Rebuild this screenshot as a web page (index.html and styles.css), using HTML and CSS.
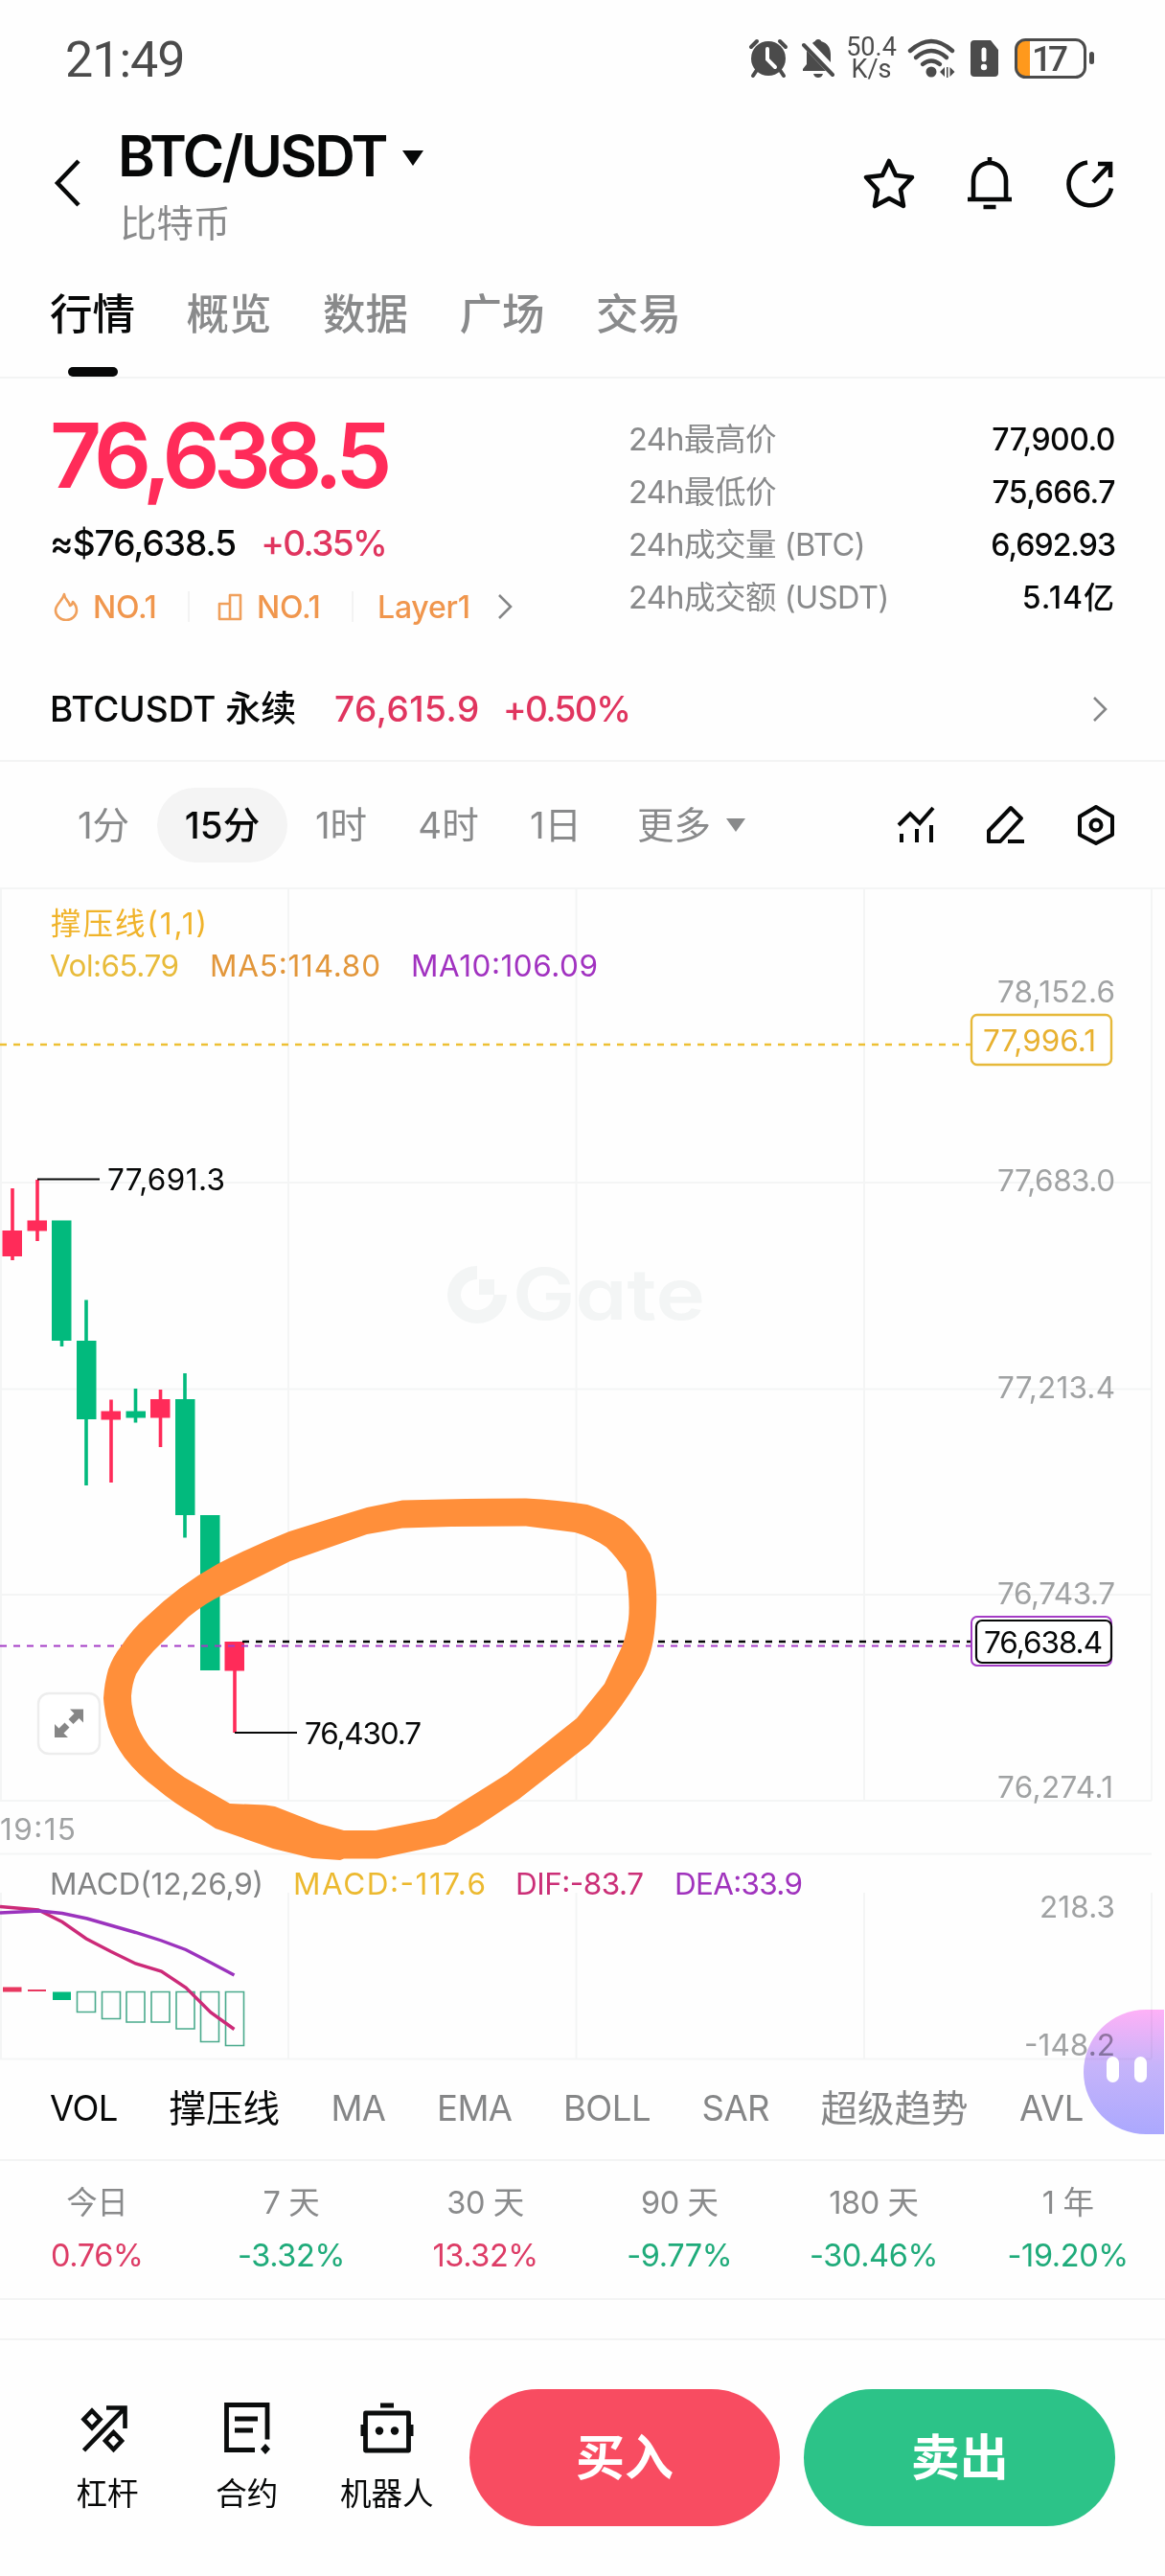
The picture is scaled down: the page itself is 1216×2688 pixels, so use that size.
FILE: index.html
```html
<!DOCTYPE html>
<html lang="zh-CN">
<head>
    <meta charset="UTF-8">
    <meta name="viewport" content="width=device-width, initial-scale=1.0">
    <title>BTC/USDT</title>
    <link rel="stylesheet" href="styles.css">
</head>
<body>
    <div class="status-bar">
        <span class="time">21:49</span>
        <div class="status-icons">
            <svg class="st-alarm" width="42" height="42" viewBox="0 0 42 42">
                <path d="M3 9l6-6M33 3l6 6" stroke="#4b4b4b" stroke-width="4" stroke-linecap="round"/>
                <path d="M9 33l-4 6M33 33l4 6" stroke="#4b4b4b" stroke-width="4" stroke-linecap="round"/>
                <circle cx="21" cy="21" r="18" fill="#4b4b4b"/>
                <path d="M20 11v11l8 8" fill="none" stroke="#fff" stroke-width="4" stroke-linecap="round"/>
            </svg>
            <svg class="st-mute" width="34" height="42" viewBox="0 0 34 42">
                <path d="M17 1c2 0 3 1 3 2 7 2 10 7 10 14v8L11 5c1-1 2-2 3-2 0-1 1-2 3-2zM5 13l20 21H1v-2l4-5zM12 37h10c-1 3-3 4-5 4s-4-1-5-4z" fill="#4b4b4b"/>
                <path d="M2 7l30 31" stroke="#4b4b4b" stroke-width="4" stroke-linecap="round"/>
            </svg>
            <div class="net-speed"><span>50.4</span><span>K/s</span></div>
            <svg class="st-wifi" width="50" height="42" viewBox="0 0 50 42">
                <g fill="none" stroke="#4b4b4b" stroke-width="4.4" stroke-linecap="round">
                    <path d="M3 13q22-20 44 0"/>
                    <path d="M9 20q16-14 32 0"/>
                    <path d="M16 27q9-7 18 0"/>
                </g>
                <circle cx="25" cy="35" r="5.5" fill="#4b4b4b"/>
                <path d="M34 35l5-5v10zM49.500 35l-5-5v10zM41 30h1.500v11h-1.500z" fill="#4b4b4b"/>
            </svg>
            <svg class="st-sim" width="31" height="40" viewBox="0 0 31 40">
                <path d="M5 1h17l8 10v24q0 4-4 4H5q-4 0-4-4V5q0-4 4-4z" fill="#4b4b4b"/>
                <path d="M15 11v10" stroke="#fff" stroke-width="5" stroke-linecap="round"/>
                <circle cx="15" cy="29" r="3.200" fill="#fff"/>
            </svg>
            <svg class="st-battery" width="84" height="42" viewBox="0 0 84 42">
                <path d="M11 2h5v38h-5q-9 0-9-9V11q0-9 9-9z" fill="#ff991c"/>
                <rect x="1.500" y="1.500" width="72" height="39" rx="10" fill="none" stroke="#4b4b4b" stroke-width="3"/>
                <rect x="78" y="14" width="5" height="13" rx="2.500" fill="#4b4b4b"/>
                <text x="18" y="34" textLength="38" class="battery-text">17</text>
            </svg>
        </div>
    </div>

    <header class="header">
        <svg class="back" width="30" height="52" viewBox="0 0 30 52">
            <path d="M27 3L5 26l22 23" fill="none" stroke="#070808" stroke-width="4.500"/>
        </svg>
        <div class="pair">
            <div class="pair-name"><span>BTC/USDT</span><i class="caret"></i></div>
            <div class="pair-sub">比特币</div>
        </div>
        <div class="header-icons">
            <svg width="56" height="56" viewBox="0 0 56 56">
                <path d="M28 5l7 15 17 2-12 13 3 17-15-8-15 8 3-17L4 22l17-2z" fill="none" stroke="#070808" stroke-width="4.600" stroke-linejoin="round"/>
            </svg>
            <svg width="56" height="56" viewBox="0 0 56 56">
                <path d="M28 1v6M11 45V25a17 18 0 0 1 34 0v20M5 45h46M21.500 53h13" fill="none" stroke="#070808" stroke-width="4.600"/>
            </svg>
            <svg width="56" height="56" viewBox="0 0 56 56">
                <path d="M25 6.500a22.500 22.500 0 1 0 25 27" fill="none" stroke="#070808" stroke-width="4.600"/>
                <path d="M36 8h13v14M49 8L31 27" fill="none" stroke="#070808" stroke-width="4.600"/>
            </svg>
        </div>
    </header>

    <nav class="tabs">
        <a class="tab active">行情</a>
        <a class="tab">概览</a>
        <a class="tab">数据</a>
        <a class="tab">广场</a>
        <a class="tab">交易</a>
    </nav>

    <section class="summary">
        <div class="summary-left">
            <div class="price">76,638.5</div>
            <div class="fiat"><span class="fiat-value">≈$76,638.5</span><span class="up">+0.35%</span></div>
            <div class="tags">
                <svg class="flame" width="26" height="30" viewBox="0 0 26 30">
                    <path d="M11 2c0 5 5 7 6 12 2-1 3-3 3-4 3 3 4 6 4 9a11 10 0 0 1-22 0c0-7 7-9 9-17z" fill="none" stroke="#f0a05c" stroke-width="2.600" stroke-linejoin="round"/>
                </svg>
                <span class="tag-no">NO.1</span>
                <i class="divider"></i>
                <svg class="block-icon" width="26" height="30" viewBox="0 0 26 30">
                    <path d="M13 28V3h11v25H2V12h11" fill="none" stroke="#f0a05c" stroke-width="2.600" stroke-linejoin="round"/>
                </svg>
                <span class="tag-no">NO.1</span>
                <i class="divider"></i>
                <span class="tag-layer">Layer1</span>
                <svg width="16" height="28" viewBox="0 0 16 28"><path d="M2 2l12 12L2 26" fill="none" stroke="#858687" stroke-width="2.600"/></svg>
            </div>
        </div>
        <div class="stats">
            <div class="stat"><span>24h最高价</span><b>77,900.0</b></div>
            <div class="stat"><span>24h最低价</span><b>75,666.7</b></div>
            <div class="stat"><span>24h成交量 (BTC)</span><b class="tight">6,692.93</b></div>
            <div class="stat"><span>24h成交额 (USDT)</span><b class="loose">5.14亿</b></div>
        </div>
    </section>

    <section class="perp">
        <span class="perp-name">BTCUSDT 永续</span>
        <span class="perp-price">76,615.9</span>
        <span class="perp-change">+0.50%</span>
        <svg width="16" height="28" viewBox="0 0 16 28"><path d="M2 2l12 12L2 26" fill="none" stroke="#858687" stroke-width="2.600"/></svg>
    </section>

    <nav class="periods">
        <a class="period">1分</a>
        <a class="period active">15分</a>
        <a class="period">1时</a>
        <a class="period">4时</a>
        <a class="period">1日</a>
        <a class="period more">更多<i class="caret"></i></a>
        <div class="tools">
            <svg width="42" height="44" viewBox="0 0 42 44">
                <path d="M3 22l12-12 10 10L39 4M6 31v9M22 26v14M37 22v18" fill="none" stroke="#070808" stroke-width="4"/>
            </svg>
            <svg width="42" height="44" viewBox="0 0 42 44">
                <path d="M3 28L26 4l11 11-22 24H3zM23 39h17" fill="none" stroke="#070808" stroke-width="4" stroke-linejoin="round"/>
            </svg>
            <svg width="42" height="44" viewBox="0 0 42 44">
                <path d="M21 3l17 10v19L21 41 4 32V13z" fill="none" stroke="#070808" stroke-width="4" stroke-linejoin="round"/>
                <circle cx="21" cy="22" r="5.500" fill="none" stroke="#070808" stroke-width="4"/>
            </svg>
        </div>
    </nav>

    <section class="chart">
        <svg width="1216" height="1224" viewBox="0 926 1216 1224">
            <!-- grid -->
            <g class="grid">
                <path d="M0 927H1216M0 1234H1202M0 1449.500H1202M0 1664H1202M0 1879H1202M0 1934.500H1202M0 2148.500H1202"/>
                <path d="M1 926V1879M301 926V1879M601.500 926V1879M902 926V1879M1202 926V1879"/>
                <path d="M1 1975V2148M301 1975V2148M601.500 1975V2148M902 1975V2148M1202 1975V2148"/>
            </g>

            <!-- watermark -->
            <g fill="#f3f5f5">
                <path d="M498 1321a31 30 0 1 0 31 30h-14a17 16 0 1 1-17-16z"/>
                <path d="M500 1335h16v16h-16z"/>
                <text x="535" y="1377" class="watermark" textLength="201" lengthAdjust="spacingAndGlyphs">Gate</text>
            </g>

            <!-- legends -->
            <text x="53" y="975" class="legend" fill="#f0b32a" textLength="163">撑压线(1,1)</text>
            <text x="52" y="1019" class="legend" fill="#e8bb3a" textLength="135">Vol:65.79</text>
            <text x="219" y="1019" class="legend" fill="#e2963a" textLength="178">MA5:114.80</text>
            <text x="429" y="1019" class="legend" fill="#a132c0" textLength="195">MA10:106.09</text>

            <!-- support and resistance lines -->
            <path d="M0 1090H1014" stroke="#edc034" stroke-width="2.400" stroke-dasharray="7 7"/>

            <!-- candles -->
            <g fill="#ff2b59">
                <path d="M11.200 1240h3.600v75h-3.600zM2.500 1284h20.500v27h-20.500z"/>
                <path d="M37.200 1231h3.600v64h-3.600zM28.500 1273.500h20.500v11h-20.500z"/>
                <path d="M114.200 1460.500h3.600v86.500h-3.600zM105.500 1472.500h20.500v9h-20.500z"/>
                <path d="M165.700 1450h3.600v60h-3.600zM157 1460h20.500v19.500h-20.500z"/>
                <path d="M243.200 1713h3.600v95h-3.600zM234.500 1713h20.500v30.500h-20.500z"/>
            </g>
            <g fill="#02ba7d">
                <path d="M62.700 1273.500h3.600v131.500h-3.600zM54 1273.500h20.500v125.500h-20.500z"/>
                <path d="M88.200 1356.500h3.600v193.500h-3.600zM80 1399h20.500v82h-20.500z"/>
                <path d="M139.700 1449h3.600v35.500h-3.600zM131.500 1472.500h20.500v7h-20.500z"/>
                <path d="M191.200 1433h3.600v171.500h-3.600zM183 1460h20.500v121h-20.500z"/>
                <path d="M209 1581h20.500v162h-20.500z"/>
            </g>
            <path d="M0 1717.500H1014" stroke="#a43cc6" stroke-width="2.200" stroke-dasharray="7 7"/>
            <path d="M253 1713H1018" stroke="#070808" stroke-width="2.400" stroke-dasharray="7 7"/>
            <path d="M39 1230.500H104M245 1808H310" stroke="#070808" stroke-width="2"/>
            <text x="112" y="1242" class="legend" fill="#070808" textLength="123">77,691.3</text>
            <text x="318" y="1820" class="legend" fill="#070808" textLength="122">76,430.7</text>

            <!-- price axis -->
            <g class="legend" fill="#a0a2a3">
                <text x="1041" y="1046" textLength="123">78,152.6</text>
                <text x="1041" y="1243" textLength="123">77,683.0</text>
                <text x="1041" y="1459" textLength="123">77,213.4</text>
                <text x="1041" y="1674" textLength="123">76,743.7</text>
                <text x="1041" y="1876" textLength="121">76,274.1</text>
                <text x="0" y="1920" textLength="79">19:15</text>
                <text x="1085" y="2001" textLength="79">218.3</text>
                <text x="1069" y="2145" textLength="95">-148.2</text>
            </g>
            <rect x="1014" y="1059" width="146" height="52" rx="6" fill="#fff" stroke="#e6b93a" stroke-width="2.400"/>
            <text x="1026" y="1097" class="legend" fill="#e8b130" textLength="118">77,996.1</text>
            <rect x="1014" y="1687" width="146" height="51" rx="6" fill="#fff" stroke="#a43cc6" stroke-width="2"/>
            <rect x="1019" y="1691" width="141" height="44" rx="6" fill="#fff" stroke="#070808" stroke-width="2.200"/>
            <text x="1027" y="1725" class="legend" fill="#070808" textLength="124">76,638.4</text>

            <!-- fullscreen button -->
            <rect x="40" y="1767" width="64" height="63" rx="11" fill="#fff" stroke="#ededed" stroke-width="2.500"/>
            <path d="M73 1783.500h14v14l-4.500-4.500-6 6-5-5 6-6zM71 1813h-14v-14l4.500 4.500 6-6 5 5-6 6z" fill="#868686"/>

            <!-- hand-drawn marker -->
            <path fill="#ff8f3a" fill-rule="evenodd" d="M420 1565.500L383 1573 347 1584 302 1598 Q262 1614 227 1632 Q187 1654 153 1687 Q138 1700 127 1717 Q118 1728 113 1742 Q109 1756 108 1772 Q109 1788 113 1802 Q119 1819 130 1834 Q144 1852 163 1866 Q182 1882 205 1895L225 1908 285 1929 326 1939 355 1941 359 1939.500 394 1939.500 465 1924.500 500 1905 542 1877 615 1820 633 1800 Q652 1777 666 1753 Q679 1735 683 1704 Q686 1680 685 1660 Q684 1640 679 1622 Q668 1601 651 1587 Q635 1577 613 1570 Q582 1565 549 1563.500 L486 1564Z
                M420 1594.500L471 1593 549 1592.500 600 1599 Q618 1604 633 1614.500 Q644 1625 653.500 1640 Q658 1672 656 1690 Q653 1712 646 1725 L631 1757 602 1793 529 1851 455 1897.500 392 1910 359 1910 333 1903 287 1885 277 1883.500 240 1882 193 1855 Q176 1844 160 1827 Q149 1815 143 1800 Q137 1785 137 1769.500 Q138 1757 142 1747 Q152 1730 167 1716 L197 1687 Q214 1673 233 1664 L303 1629 383 1601Z"/>

            <!-- macd -->
            <text x="52" y="1977" class="legend" fill="#828384" textLength="223">MACD(12,26,9)</text>
            <text x="306" y="1977" class="legend" fill="#ecb92f" textLength="201">MACD:-117.6</text>
            <text x="538" y="1977" class="legend" fill="#cb2f77" textLength="134">DIF:-83.7</text>
            <text x="704" y="1977" class="legend" fill="#a033bd" textLength="134">DEA:33.9</text>
            <path d="M3 2073.500h19.500v5h-19.500zM29 2076h19v2h-19z" fill="#e83860"/>
            <path d="M55 2078.500h19v8.500h-19z" fill="#02ba7d"/>
            <path d="M80.500 2078.500h19v21h-19zM106.500 2078.500h19v28h-19zM132 2078.500h19v31.500h-19zM158 2078.500h19v31.500h-19zM184 2078.500h19v38.500h-19zM209.500 2078.500h19v52h-19zM235.500 2078.500h19v56h-19z" fill="none" stroke="#4aaa8c" stroke-width="1.600"/>
            <path d="M0 1989.500L40 1993 65 2005.500 90 2023 116 2036.500 141.500 2049 168.500 2057 194 2074 220 2100 244.500 2117.500" fill="none" stroke="#cc2a78" stroke-width="3.400"/>
            <path d="M0 1996L41 1994 65 1996.500 91 2002 141.500 2016.500 168.500 2025 194 2034.500 220 2048 244.500 2061" fill="none" stroke="#9b33bd" stroke-width="3.400"/>
        </svg>
    </section>

    <nav class="indicators">
        <a class="on">VOL</a>
        <a class="on zh">撑压线</a>
        <a>MA</a>
        <a>EMA</a>
        <a>BOLL</a>
        <a>SAR</a>
        <a class="zh">超级趋势</a>
        <a>AVL</a>
        <div class="assistant"><i></i><i></i></div>
    </nav>

    <section class="performance">
        <div><span>今日</span><b class="red">0.76%</b></div>
        <div><span>7 天</span><b class="green">-3.32%</b></div>
        <div><span>30 天</span><b class="red">13.32%</b></div>
        <div><span>90 天</span><b class="green">-9.77%</b></div>
        <div><span>180 天</span><b class="green">-30.46%</b></div>
        <div><span>1 年</span><b class="green">-19.20%</b></div>
    </section>

    <footer class="bottom-bar">
        <a class="action">
            <svg width="56" height="56" viewBox="0 0 56 56">
                <path d="M3.500 52L46 8M27 7.500h19.500v21.500M12 10.500l8.500 9L12 28.500 3.500 19.500zM34.500 33l8.500 9-8.500 9-8.500-9z" fill="none" stroke="#0b0d0d" stroke-width="4.600"/>
            </svg>
            <span>杠杆</span>
        </a>
        <a class="action">
            <svg width="56" height="56" viewBox="0 0 56 56">
                <path d="M36 51.500H6.500V4.500H49v36M15 19h24M15 31h19" fill="none" stroke="#0b0d0d" stroke-width="4.800"/>
                <path d="M47 45l5 5.500-5 5.500-5-5.500z" fill="#0b0d0d"/>
            </svg>
            <span>合约</span>
        </a>
        <a class="action">
            <svg width="56" height="56" viewBox="0 0 56 56">
                <path d="M21 5h14" stroke="#0b0d0d" stroke-width="5"/>
                <rect x="5.500" y="13" width="45" height="39" fill="none" stroke="#0b0d0d" stroke-width="4.800" stroke-linejoin="round"/>
                <path d="M3 25v12M53 25v12" stroke="#0b0d0d" stroke-width="5"/>
                <circle cx="20" cy="31.500" r="4.200" fill="#0b0d0d"/>
                <circle cx="36" cy="31.500" r="4.200" fill="#0b0d0d"/>
            </svg>
            <span>机器人</span>
        </a>
        <button class="buy">买入</button>
        <button class="sell">卖出</button>
    </footer>
</body>
</html>
```
FILE: styles.css
```css
* {
    box-sizing: border-box;
}
body {
    font-family: Inter, "Noto Sans CJK SC", sans-serif;
    margin: 0;
    padding: 0;
    width: 1216px;
    height: 2688px;
    background-color: #fefefe;
    color: #070808;
    overflow: hidden;
}
svg {
    display: block;
    flex: none;
}
a, span, b {
    white-space: nowrap;
}
i {
    display: block;
    flex: none;
}

/* status bar */
.status-bar {
    height: 120px;
    padding: 2px 73px 0 68px;
    display: flex;
    justify-content: space-between;
    align-items: center;
    font-family: Roboto, sans-serif;
    color: #4b4b4b;
}
.time {
    padding-top: 3px;
    font-size: 52px;
    letter-spacing: -1px;
    line-height: 60px;
}
.status-icons {
    display: flex;
    align-items: center;
}
.st-mute {
    margin-left: 14px;
}
.net-speed {
    width: 51px;
    margin-left: 13px;
    display: flex;
    flex-direction: column;
    align-items: center;
    font-size: 27px;
    line-height: 23px;
}
.st-wifi {
    margin-left: 12px;
}
.st-sim {
    margin-left: 15px;
}
.st-battery {
    margin-left: 16px;
}
.battery-text {
    font-family: Roboto, sans-serif;
    font-size: 37px;
    font-weight: 500;
    fill: #4b4b4b;
}

/* header */
.header {
    height: 150px;
    padding: 0 50px 0 55px;
    display: flex;
}
.back {
    margin-top: 45px;
}
.pair {
    margin-left: 38px;
    flex: 1;
}
.pair-name {
    margin-top: 7px;
    display: flex;
    align-items: center;
    font-size: 59px;
    font-weight: 600;
    line-height: 72px;
    letter-spacing: -2.5px;
}
.caret {
    width: 0;
    height: 0;
    border: 11px solid transparent;
    border-top: 16px solid #070808;
    border-bottom: 0;
    margin: 4px 0 0 17px;
}
.pair-sub {
    margin-top: 10px;
    padding-left: 2px;
    font-size: 38.500px;
    line-height: 48px;
    color: #898a8b;
}
.header-icons {
    display: flex;
    gap: 49px;
    margin-top: 43px;
}

/* tabs */
.tabs {
    height: 125px;
    padding-left: 52px;
    display: flex;
    gap: 53.500px;
    border-bottom: 2px solid #f3f4f4;
}
.tab {
    display: flex;
    flex-direction: column;
    align-items: center;
    justify-content: space-between;
    height: 123px;
    padding-top: 28px;
    font-size: 44.500px;
    font-weight: 500;
    line-height: 60px;
    color: #898a8b;
}
.tab.active {
    color: #070808;
}
.tab.active::after {
    content: "";
    width: 52px;
    height: 10px;
    border-radius: 5px;
    background-color: #070808;
}

/* price summary */
.summary {
    height: 292px;
    padding: 0 52px;
    display: flex;
    justify-content: space-between;
}
.price {
    margin-top: 30px;
    font-size: 94px;
    font-weight: 600;
    line-height: 100px;
    letter-spacing: -6.600px;
    color: #ff2b59;
}
.fiat {
    margin-top: 18px;
    display: flex;
    gap: 26px;
    font-size: 37px;
    font-weight: 500;
    line-height: 48px;
    letter-spacing: -1px;
}
.fiat .up {
    letter-spacing: -1.600px;
}
.up, .perp-price, .perp-change {
    color: #e0355f;
}
.tags {
    margin-top: 24px;
    height: 36px;
    padding-left: 4px;
    display: flex;
    align-items: center;
    font-size: 32px;
    font-weight: 500;
    letter-spacing: -0.200px;
    color: #f0964d;
}
.tag-no {
    width: 66px;
    margin-left: 15px;
}
.divider {
    width: 2px;
    height: 32px;
    margin-left: 33px;
    background-color: #f3f3f3;
}
.block-icon {
    margin-left: 29px;
}
.tag-layer {
    width: 96px;
    margin: 0 29px 0 25px;
}
.stats {
    width: 508px;
    padding-top: 36px;
}
.stat {
    height: 55px;
    display: flex;
    justify-content: space-between;
    font-size: 32px;
    line-height: 55px;
    letter-spacing: -0.500px;
    color: #898a8b;
}
.stat span {
    font-size: 32.500px;
}
.stat b {
    font-weight: 500;
    color: #070808;
}
.stat .tight {
    letter-spacing: -1px;
}
.stat .loose {
    letter-spacing: 1px;
}

/* perpetual contract */
.perp {
    height: 108px;
    padding: 0 60px 0 52px;
    display: flex;
    align-items: center;
    border-bottom: 2px solid #f3f4f4;
    font-size: 37px;
    font-weight: 500;
    line-height: 48px;
}
.perp-name {
    width: 297px;
}
.perp-price {
    width: 176px;
    letter-spacing: 0.500px;
}
.perp-change {
    flex: 1;
    letter-spacing: -1.600px;
}

/* periods */
.periods {
    height: 131px;
    padding: 0 51px 0 52px;
    display: flex;
    align-items: center;
}
.period {
    width: 112px;
    height: 78px;
    display: flex;
    align-items: center;
    justify-content: center;
    font-size: 38.500px;
    line-height: 76px;
    color: #898a8b;
}
.period.active {
    width: 136px;
    border-radius: 39px;
    background-color: #f4f4f4;
    font-weight: 500;
    color: #070808;
}
.period.more {
    margin-left: 29px;
    justify-content: flex-start;
}
.period .caret {
    border-width: 14px 10px 0;
    border-top-color: #898a8b;
    margin: 0 0 0 16px;
}
.tools {
    margin-left: auto;
    display: flex;
    gap: 52px;
}

/* chart */
.grid {
    fill: none;
    stroke: #f4f5f5;
    stroke-width: 2;
}
.legend {
    font-size: 31.500px;
}
.watermark {
    font-size: 74px;
    font-weight: 600;
    font-feature-settings: "cv11" 1;
}

/* indicators */
.indicators {
    position: relative;
    height: 105px;
    padding: 0 85px 3px 52px;
    display: flex;
    align-items: center;
    justify-content: space-between;
    border-bottom: 2px solid #f3f4f4;
    font-size: 36.500px;
    line-height: 50px;
    letter-spacing: -0.500px;
    color: #858687;
}
.indicators .on {
    color: #070808;
}
.indicators .zh {
    font-size: 38.500px;
    letter-spacing: 0;
}
.assistant {
    position: absolute;
    top: -53px;
    right: 1px;
    width: 84px;
    height: 130px;
    padding: 49px 0 0 24px;
    display: flex;
    gap: 16px;
}
/* the axis label stays readable through the bubble */
.assistant::before {
    content: "";
    position: absolute;
    inset: 0;
    border-radius: 65px 0 0 65px;
    background: linear-gradient(#ffb2f8, #c7b5fb 45%, #aca9ff);
    mix-blend-mode: multiply;
}
.assistant i {
    position: relative;
    width: 13px;
    height: 27px;
    border-radius: 7px;
    background-color: #fff;
}

/* performance */
.performance {
    height: 145px;
    display: grid;
    grid-template-columns: repeat(6, 1fr);
    border-bottom: 2px solid #f3f4f4;
}
.performance div {
    display: flex;
    flex-direction: column;
    align-items: center;
    padding-top: 22px;
    font-size: 32.500px;
    line-height: 44px;
    letter-spacing: -0.400px;
    color: #898a8b;
}
.performance b {
    margin-top: 11px;
    font-weight: 400;
}
.performance .red {
    color: #dd3c66;
}
.performance .green {
    color: #1fab7a;
}

/* bottom bar */
.bottom-bar {
    height: 248px;
    margin-top: 40px;
    padding: 51px 52px 0 57px;
    display: flex;
    border-top: 2px solid #f3f4f4;
}
.action {
    width: 110px;
    padding-top: 12px;
    display: flex;
    flex-direction: column;
    align-items: center;
}
.action + .action {
    margin-left: 36px;
}
.action span {
    margin-top: 18px;
    font-size: 32.500px;
    line-height: 48px;
}
.bottom-bar button {
    width: 325px;
    height: 143px;
    padding: 0 0 8px;
    border: none;
    border-radius: 72px;
    color: white;
    font-family: Inter, "Noto Sans CJK SC", sans-serif;
    font-size: 51px;
    font-weight: 600;
}
.bottom-bar .buy {
    margin-left: 31px;
    background-color: #f84c61;
}
.bottom-bar .sell {
    margin-left: 25px;
    background-color: #2cc388;
}
```
